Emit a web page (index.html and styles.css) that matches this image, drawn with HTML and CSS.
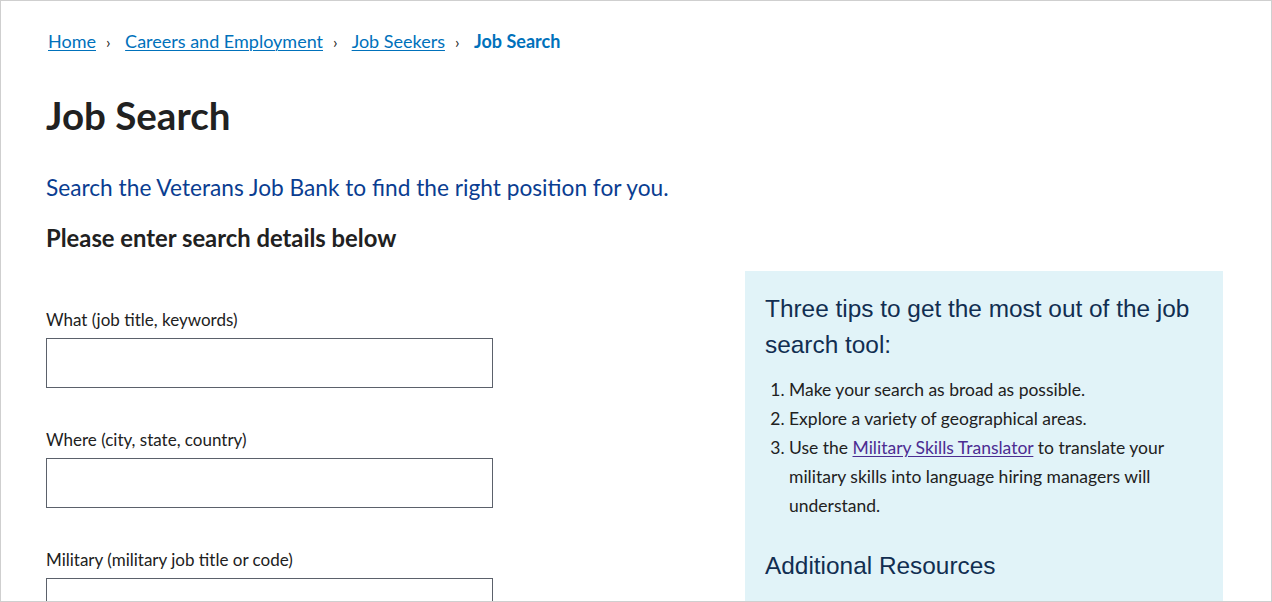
FILE: index.html
```html
<!DOCTYPE html>
<html lang="en">
<head>
<meta charset="utf-8">
<title>Job Search</title>
<link rel="stylesheet" href="styles.css">
</head>
<body>
<div class="page">
  <nav class="breadcrumbs" aria-label="Breadcrumb">
    <a href="#">Home</a><span class="sep">›</span>
    <a href="#">Careers and Employment</a><span class="sep">›</span>
    <a href="#">Job Seekers</a><span class="sep">›</span>
    <span class="current">Job Search</span>
  </nav>
  <h1 class="title">Job Search</h1>
  <p class="lead">Search the Veterans Job Bank to find the right position for you.</p>
  <h2 class="subtitle">Please enter search details below</h2>
  <div class="row">
    <form class="search-form">
      <div class="field">
        <label for="what">What (job title, keywords)</label>
        <input id="what" type="text">
      </div>
      <div class="field">
        <label for="where">Where (city, state, country)</label>
        <input id="where" type="text">
      </div>
      <div class="field">
        <label for="military">Military (military job title or code)</label>
        <input id="military" type="text">
      </div>
    </form>
    <aside class="tips">
      <h3 class="tips-title">Three tips to get the most out of the job search tool:</h3>
      <ol class="tips-list">
        <li>Make your search as broad as possible.</li>
        <li>Explore a variety of geographical areas.</li>
        <li><span>Use the </span><a href="#" class="visited">Military Skills Translator</a><span> to translate your military skills into language hiring managers will understand.</span></li>
      </ol>
      <h3 class="tips-title resources">Additional Resources</h3>
    </aside>
  </div>
</div>
</body>
</html>
```

FILE: styles.css
```css
* { box-sizing: border-box; }
html, body { margin: 0; padding: 0; background: #fff; }
body {
  font-family: "Lato", "Liberation Sans", sans-serif;
  color: #212121;
}
.page {
  width: 1272px;
  height: 602px;
  border: 1px solid #cfcfcf;
  overflow: hidden;
  padding: 28px 48px 0 45px;
}
.breadcrumbs {
  font-size: 18px;
  line-height: 24px;
  height: 24px;
  white-space: nowrap;
  padding-left: 2px;
}
.breadcrumbs a {
  color: #0071bb;
  text-decoration: underline;
  text-underline-offset: 2px;
  text-decoration-thickness: 1px;
}
.breadcrumbs .sep {
  color: #212121;
  margin: 0 10px;
  font-size: 16px;
}
.breadcrumbs .current {
  color: #0071bb;
  font-weight: 700;
}
.title {
  margin: 38px 0 0;
  font-size: 38.5px;
  line-height: 48px;
  font-weight: 700;
  color: #212121;
}
.lead {
  margin: 34px 0 0;
  font-size: 22.7px;
  line-height: 30px;
  color: #0a3d91;
}
.subtitle {
  margin: 20px 0 0;
  font-size: 23.8px;
  line-height: 30px;
  font-weight: 700;
}
.row {
  margin-top: 18px;
  display: flex;
  justify-content: space-between;
  align-items: flex-start;
}
.search-form {
  width: 447px;
  padding-top: 37px;
  display: flex;
  flex-direction: column;
  gap: 40px;
}
.field {
  display: flex;
  flex-direction: column;
}
.field label {
  font-size: 17px;
  line-height: 24px;
  margin-bottom: 6px;
  color: #212121;
}
.field input {
  width: 447px;
  height: 50px;
  border: 1px solid #5b616b;
  border-radius: 0;
  margin: 0;
  padding: 0 10px;
  font: inherit;
}
.tips {
  width: 478px;
  margin-left: auto;
  background: #e1f3f8;
  padding: 20px 20px 40px;
  min-height: 360px;
}
.tips-title {
  margin: 0;
  font-family: "Liberation Sans", Arial, sans-serif;
  font-weight: 400;
  font-size: 24.4px;
  line-height: 36px;
  color: #112e51;
}
.tips-list {
  margin: 12px 0 0;
  padding-left: 24px;
  font-size: 17.5px;
  line-height: 29px;
  color: #212121;
}
.tips-list a.visited {
  color: #4c2c92;
  text-decoration: underline;
  text-underline-offset: 2px;
}
.resources {
  margin-top: 28px;
}
```
